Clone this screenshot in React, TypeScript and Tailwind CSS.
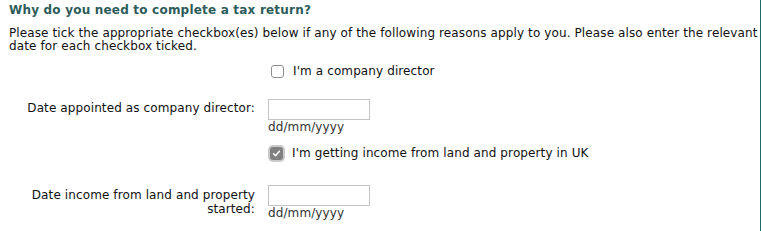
import React from "react";

function EmptyBox() {
  return (
    <span className="inline-block w-[13px] h-[13px] rounded-[3px] border border-[#8e8e8e] bg-white shrink-0 ml-[3px] mr-[9px]" />
  );
}

function CheckedBox() {
  return (
    <span className="inline-flex items-center justify-center w-[17px] h-[17px] rounded-[5px] bg-[#c9c9c9] shrink-0 mr-[7px]">
      <span className="inline-flex items-center justify-center w-[13px] h-[13px] rounded-[3px] bg-[#808080]">
        <svg width="9" height="9" viewBox="0 0 9 9">
          <path d="M1.6 4.8 L3.6 6.8 L7.4 2.2" fill="none" stroke="#ffffff" strokeWidth="1.5" strokeLinecap="round" strokeLinejoin="round" />
        </svg>
      </span>
    </span>
  );
}

export default function App() {
  return (
    <div
      className="w-[761px] h-[231px] bg-white border-r border-[#1d6b67] text-[#111111] text-[12px] leading-[13px] tracking-[0.11px] overflow-hidden"
      style={{ fontFamily: '"DejaVu Sans", Verdana, sans-serif' }}
    >
      <div className="pl-[9px] pt-[3px]">
        <h2 className="font-bold text-[#2d5c5a] text-[12px] leading-[14px] tracking-[0.2px]">
          Why do you need to complete a tax return?
        </h2>
        <p className="mt-[10px] leading-[13px]">
          Please tick the appropriate checkbox(es) below if any of the following reasons apply to you. Please also enter the relevant date for each checkbox ticked.
        </p>
      </div>

      <div className="flex mt-[10px]">
        <div className="w-[268px] shrink-0" />
        <label className="flex items-center h-[16px]">
          <EmptyBox />
          <span>I'm a company director</span>
        </label>
      </div>

      <div className="flex mt-[20px]">
        <div className="w-[255px] shrink-0 text-right pt-[3px]">Date appointed as company director:</div>
        <div className="ml-[13px] flex flex-col">
          <input type="text" className="w-[102px] h-[21px] border border-[#c4c4c4] bg-white outline-none" />
          <span className="mt-[1px] text-[#333333]">dd/mm/yyyy</span>
        </div>
      </div>

      <div className="flex mt-[11px]">
        <div className="w-[268px] shrink-0" />
        <label className="flex items-center h-[17px]">
          <CheckedBox />
          <span>I'm getting income from land and property in UK</span>
        </label>
      </div>

      <div className="flex mt-[23px]">
        <div className="w-[255px] shrink-0 text-right pt-[3px] leading-[14px]">
          Date income from land and property
          <br />
          started:
        </div>
        <div className="ml-[13px] flex flex-col">
          <input type="text" className="w-[102px] h-[21px] border border-[#c4c4c4] bg-white outline-none" />
          <span className="mt-[1px] text-[#333333]">dd/mm/yyyy</span>
        </div>
      </div>
    </div>
  );
}
